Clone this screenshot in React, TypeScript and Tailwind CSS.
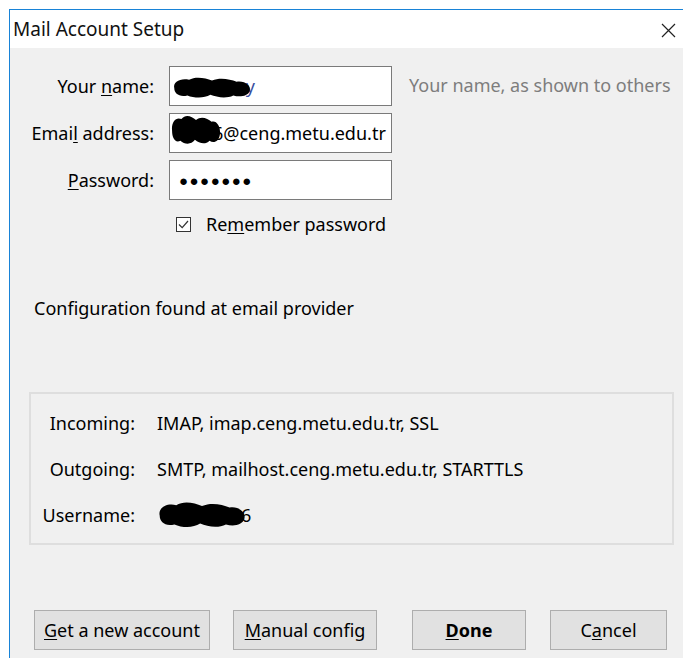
import React from 'react';

// underlined access-key letter, like the native dialog mnemonics
const Key: React.FC<{ children: React.ReactNode }> = ({ children }) => (
  <span className="underline underline-offset-2 decoration-1">{children}</span>
);

// scribble used to hide personal details
const Blob: React.FC<{ w: number; h: number; className?: string }> = ({ w, h, className }) => (
  <svg width={w} height={h} viewBox="0 0 100 40" preserveAspectRatio="none" className={className}>
    <path
      d="M4 22 C2 12 12 6 22 9 C30 3 42 6 50 10 C60 5 72 8 80 12 C90 10 98 18 96 26 C94 34 84 36 76 33 C68 38 56 36 48 32 C40 38 28 37 20 33 C10 36 4 30 4 22 Z"
      fill="#000"
    />
  </svg>
);

const Field: React.FC<{ label: React.ReactNode; children: React.ReactNode; hint?: string }> = ({
  label,
  children,
  hint,
}) => (
  <div className="flex items-center h-[40px]">
    <div className="w-[144px] text-right whitespace-nowrap">{label}</div>
    <div className="ml-[15px] w-[223px] h-[40px] bg-white border border-[#7a7a7a] flex items-center px-[3px] overflow-hidden relative shrink-0">
      {children}
    </div>
    {hint && <div className="ml-[17px] text-[#7d7d7d] -mt-[1px] whitespace-nowrap">{hint}</div>}
  </div>
);

const Button: React.FC<{ children: React.ReactNode; width: string; bold?: boolean; className?: string }> = ({
  children,
  width,
  bold,
  className,
}) => (
  <button
    className={`h-[40px] ${width} bg-[#e1e1e1] border border-[#adadad] text-black shrink-0 ${bold ? 'font-bold' : ''} ${className ?? ''}`}
  >
    {children}
  </button>
);

export default function App() {
  return (
    <div
      className="w-[683px] h-[658px] bg-white pt-[9px] pl-[9px] overflow-hidden text-[18px] text-black"
      style={{ fontFamily: '"Noto Sans", sans-serif' }}
    >
      <div className="w-[674px] h-[660px] border-l border-t border-[#1883d7] flex flex-col">
        {/* title bar */}
        <div className="h-[38px] bg-white flex items-center justify-between pl-[3px] pr-[7px]">
          <span className="text-[19px] text-[#111]">Mail Account Setup</span>
          <svg width="15" height="15" viewBox="0 0 15 15" className="mt-[2px]">
            <path d="M1 1 L14 14 M14 1 L1 14" stroke="#222" strokeWidth="1.2" />
          </svg>
        </div>

        <div className="flex-1 bg-[#f0f0f0] pt-[18px]">
          {/* account form */}
          <div className="flex flex-col gap-[7px]">
            <Field
              label={
                <>
                  Your <Key>n</Key>ame:
                </>
              }
              hint="Your name, as shown to others"
            >
              <Blob w={82} h={26} className="absolute left-[1px] top-[7px]" />
              <span className="ml-[56px] text-[#3b4fa0]">my</span>
            </Field>
            <Field
              label={
                <>
                  Emai<Key>l</Key> address:
                </>
              }
            >
              <Blob w={52} h={36} className="absolute left-[0px] -top-[3px]" />
              <span className="ml-[40px] whitespace-nowrap">6@ceng.metu.edu.tr</span>
            </Field>
            <Field
              label={
                <>
                  <Key>P</Key>assword:
                </>
              }
            >
              <span className="ml-[6px] text-[15px] tracking-[1.5px] font-bold">●●●●●●●</span>
            </Field>
          </div>

          <div className="flex items-center mt-[17px] ml-[166px] h-[15px]">
            <svg width="15" height="15" viewBox="0 0 15 15">
              <rect x="0.5" y="0.5" width="14" height="14" fill="#fff" stroke="#333" />
              <path d="M3 7.5 L6.2 10.7 L12 4" stroke="#333" strokeWidth="1.2" fill="none" />
            </svg>
            <span className="ml-[15px] whitespace-nowrap">
              Re<Key>m</Key>ember password
            </span>
          </div>

          <div className="mt-[65px] ml-[24px] h-[22px] leading-[22px]">Configuration found at email provider</div>

          {/* server summary */}
          <div className="mt-[73px] ml-[19px] w-[645px] h-[153px] border-2 border-[#dedede] pt-[18px] flex flex-col gap-[24px]">
            <div className="flex items-center h-[22px]">
              <div className="w-[104px] text-right">Incoming:</div>
              <div className="ml-[22px] whitespace-nowrap">IMAP, imap.ceng.metu.edu.tr, SSL</div>
            </div>
            <div className="flex items-center h-[22px]">
              <div className="w-[104px] text-right">Outgoing:</div>
              <div className="ml-[22px] whitespace-nowrap">SMTP, mailhost.ceng.metu.edu.tr, STARTTLS</div>
            </div>
            <div className="flex items-center h-[22px]">
              <div className="w-[104px] text-right">Username:</div>
              <div className="ml-[22px] relative w-[100px] h-[22px]">
                <Blob w={92} h={32} className="absolute -left-[1px] -top-[6px]" />
                <span className="absolute left-[84px] top-0 leading-[22px]">6</span>
              </div>
            </div>
          </div>

          {/* dialog buttons */}
          <div className="flex mt-[65px] ml-[24px]">
            <Button width="w-[176px]">
              <Key>G</Key>et a new account
            </Button>
            <Button width="w-[144px]" className="ml-[23px]">
              <Key>M</Key>anual config
            </Button>
            <Button width="w-[114px]" bold className="ml-[35px]">
              <Key>D</Key>one
            </Button>
            <Button width="w-[117px]" className="ml-[24px]">
              C<Key>a</Key>ncel
            </Button>
          </div>
        </div>
      </div>
    </div>
  );
}
